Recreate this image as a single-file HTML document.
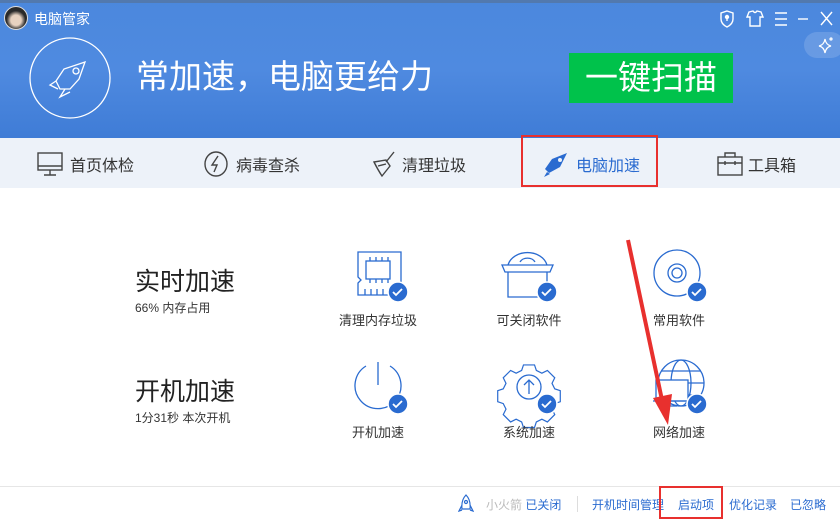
<!DOCTYPE html>
<html><head><meta charset="utf-8"><style>
*{margin:0;padding:0;box-sizing:border-box}
body{width:840px;height:520px;overflow:hidden;position:relative;background:#fff;font-family:"Liberation Sans","Noto Sans CJK SC",sans-serif}
.abs{position:absolute}
.hdr{left:0;top:0;width:840px;height:138px;background:linear-gradient(180deg,#4b88dd 0%,#4f8ae0 50%,#3f7cd6 100%)}
.nav{left:0;top:138px;width:840px;height:50px;background:#edf2f9}
.navi{top:150px;font-size:16px;color:#333;display:flex;align-items:center}
.lbl{font-size:13px;color:#333;text-align:center;width:120px}
.foot a{color:#2a6bd0;text-decoration:none}
</style></head><body>
<div class="abs hdr"></div>
<div class="abs" style="left:0;top:0;width:840px;height:3px;background:#5a6a80;opacity:.5"></div>
<div class="abs" style="left:4px;top:6px;width:24px;height:24px;border-radius:50%;background:radial-gradient(circle at 50% 60%,#e8d2c0 30%,#2a2a2a 55%);border:1px solid #ddd"></div>
<div class="abs" style="left:34px;top:9px;color:#fff;font-size:14px">电脑管家</div>
<svg class="abs" style="left:720px;top:8px" width="120" height="22" viewBox="0 0 120 22" fill="none" stroke="#fff" stroke-width="1.4">
<path d="M7 3 L13 5 L13 11 Q13 16 7 19 Q1 16 1 11 L1 5 Z"/><circle cx="7" cy="9" r="1.5" fill="#fff"/><path d="M7 10 V13"/>
<path d="M29 4 L33 3 Q35 6 37 3 L41 4 L43 9 L40 9 L40 18 L30 18 L30 9 L27 9 Z"/>
<path d="M55 5 H67 M55 11 H67 M55 17 H67"/>
<path d="M78 11 H88"/>
<path d="M101 4 L112 17 M112 4 L101 17"/>
</svg>
<div class="abs" style="left:804px;top:32px;width:40px;height:26px;border-radius:13px;background:rgba(255,255,255,.15)"></div>
<svg class="abs" style="left:818px;top:36px" width="16" height="18" viewBox="0 0 16 18" fill="none" stroke="#fff" stroke-width="1.2"><path d="M7 3 Q8 9 13 10 Q8 11 7 17 Q6 11 1 10 Q6 9 7 3Z"/><circle cx="13" cy="3" r="1"/></svg>
<svg class="abs" style="left:29px;top:37px" width="82" height="82" viewBox="0 0 82 82" fill="none" stroke="#fff" stroke-width="1.3">
<circle cx="41" cy="41" r="40"/>
<path d="M56 25 L35 32 L27 44 L31 52 L41 52 L50 42 Z M36 52 L31 60 L41 55 M27 44 L21 48 L29 52"/><circle cx="47" cy="34" r="3"/>
</svg>
<div class="abs" style="left:136px;top:55px;color:#fff;font-size:33px;line-height:44px">常加速，电脑更给力</div>
<div class="abs" style="left:569px;top:53px;width:164px;height:50px;background:#00c24b;color:#fff;font-size:33px;text-align:center;line-height:50px">一键扫描</div>
<div class="abs nav"></div>
<div class="abs navi" style="left:36px"><svg width="28" height="28" viewBox="0 0 28 28" fill="none" stroke="#444" stroke-width="1.4"><rect x="2" y="3" width="24" height="17"/><path d="M2 16H26M14 20V25M8 25H20"/></svg><span style="margin-left:6px">首页体检</span></div>
<div class="abs navi" style="left:202px"><svg width="28" height="28" viewBox="0 0 28 28" fill="none" stroke="#444" stroke-width="1.4"><ellipse cx="14" cy="14" rx="11" ry="12"/><path d="M16 6 L10 15 H15 L12 22"/></svg><span style="margin-left:6px">病毒查杀</span></div>
<div class="abs navi" style="left:370px"><svg width="28" height="28" viewBox="0 0 28 28" fill="none" stroke="#444" stroke-width="1.4"><path d="M24 2 L16 12 M4 12 L16 10 L20 16 L12 26 Q8 20 4 12Z M8 16 L16 14"/></svg><span style="margin-left:4px">清理垃圾</span></div>
<div class="abs navi" style="left:540px;color:#2a6bd0"><svg width="30" height="28" viewBox="0 0 30 28" fill="#2a6bd0"><path d="M27 3 L12 9 L5 19 L9 23 L20 17 Z"/><circle cx="20" cy="10" r="2" fill="#edf2f9"/><path d="M7 22 L4 27 L10 24Z"/></svg><span style="margin-left:6px">电脑加速</span></div>
<div class="abs" style="left:521px;top:135px;width:137px;height:52px;border:2px solid #e8302e"></div>
<div class="abs navi" style="left:716px"><svg width="28" height="28" viewBox="0 0 28 28" fill="none" stroke="#444" stroke-width="1.4"><rect x="2" y="7" width="24" height="18"/><path d="M9 7V3H19V7M2 13H26M9 11V15M19 11V15"/></svg><span style="margin-left:4px">工具箱</span></div>
<div class="abs" style="left:135px;top:262px;font-size:25px;color:#222">实时加速</div>
<div class="abs" style="left:135px;top:299px;font-size:12px;color:#333">66% 内存占用</div>
<div class="abs" style="left:135px;top:372px;font-size:25px;color:#222">开机加速</div>
<div class="abs" style="left:135px;top:409px;font-size:12px;color:#333">1分31秒 本次开机</div>
<svg class="abs" style="left:0;top:0" width="840" height="520" viewBox="0 0 840 520">
<g fill="none" stroke="#2a6bd0" stroke-width="1.3">
<!-- memory -->
<path d="M358 252 H401 V295 H358 V283 L361 280 L358 277 Z"/><rect x="366" y="261" width="24" height="18"/>
<path d="M370 261V257M376 261V257M382 261V257M388 261V257M370 279V283M376 279V283M382 279V283M388 279V283M365 295V289M371 295V289M377 295V289M383 295V289M389 295V289"/>
<!-- box -->
<path d="M526 265 A20 16 0 0 1 565 265 M538 262 A8 6 0 0 1 553 262" transform="translate(-18 0)"/>
<path d="M502 265 H553 L550 272 H505 Z M508 272 V297 H547 V272"/>
<!-- disc -->
<circle cx="677" cy="273" r="23"/><circle cx="677" cy="273" r="9"/><circle cx="677" cy="273" r="5"/>
<!-- power -->
<path d="M378 362 V385"/><path d="M366 366 A23 23 0 1 0 390 366"/>
<!-- gear -->
<g transform="translate(529 387)">
<path d="M-6 -24 h12 l2 6 l6 3 l6-3 l8 8 l-3 6 l3 6 l6 2 v12 l-6 2 l-3 6 l3 6 l-8 8 l-6-3 l-6 3 l-2 6 h-12 l-2-6 l-6-3 l-6 3 l-8-8 l3-6 l-3-6 l-6-2 v-12 l6-2 l3-6 l-3-6 l8-8 l6 3 l6-3 z" transform="scale(0.92)"/>
<circle r="12"/><path d="M0 7V-7M-5 -2L0 -7L5 -2"/></g>
<!-- globe -->
<circle cx="681" cy="383" r="23"/><ellipse cx="681" cy="383" rx="10" ry="23"/><path d="M658 383H704M661 371H701M661 395H701"/>
<rect x="656" y="380" width="32" height="21" fill="#fff"/><path d="M653 401H690M670 401V406M664 406H677"/>
</g>
<g fill="#2a6bd0" stroke="#fff" stroke-width="1.6">
<circle cx="398" cy="292" r="10"/><circle cx="547" cy="292" r="10"/><circle cx="697" cy="292" r="10"/>
<circle cx="398" cy="404" r="10"/><circle cx="547" cy="404" r="10"/><circle cx="697" cy="404" r="10"/>
</g>
<g fill="none" stroke="#fff" stroke-width="1.8">
<path d="M393 292l3 3 6-6"/><path d="M542 292l3 3 6-6"/><path d="M692 292l3 3 6-6"/>
<path d="M393 404l3 3 6-6"/><path d="M542 404l3 3 6-6"/><path d="M692 404l3 3 6-6"/>
</g>
<path d="M628 240 L662 400" stroke="#e8302e" stroke-width="4"/>
<path d="M653 398 L672 394 L668 425 Z" fill="#e8302e"/>
</svg>
<div class="abs lbl" style="left:318px;top:310px">清理内存垃圾</div>
<div class="abs lbl" style="left:469px;top:310px">可关闭软件</div>
<div class="abs lbl" style="left:619px;top:310px">常用软件</div>
<div class="abs lbl" style="left:318px;top:422px">开机加速</div>
<div class="abs lbl" style="left:469px;top:422px">系统加速</div>
<div class="abs lbl" style="left:619px;top:422px">网络加速</div>
<div class="abs" style="left:0;top:486px;width:840px;height:1px;background:#e6e6e6"></div>
<svg class="abs" style="left:458px;top:493px" width="16" height="22" viewBox="0 0 16 22" fill="none" stroke="#2a6bd0" stroke-width="1.2"><path d="M8 2 Q13 7 12 16 H4 Q3 7 8 2Z M4 12 L1 18 L4 17 M12 12 L15 18 L12 17"/><circle cx="8" cy="9" r="1.5"/></svg>
<div class="abs foot" style="left:486px;top:496px;font-size:12px;color:#bbb;white-space:nowrap">小火箭 <a>已关闭</a></div>
<div class="abs" style="left:577px;top:496px;width:1px;height:16px;background:#ddd"></div>
<div class="abs foot" style="left:592px;top:496px;font-size:12px"><a>开机时间管理</a></div>
<div class="abs foot" style="left:678px;top:496px;font-size:12px"><a>启动项</a></div>
<div class="abs" style="left:659px;top:486px;width:64px;height:33px;border:2px solid #e8302e"></div>
<div class="abs foot" style="left:729px;top:496px;font-size:12px"><a>优化记录</a></div>
<div class="abs foot" style="left:790px;top:496px;font-size:12px"><a>已忽略</a></div>
</body></html>
